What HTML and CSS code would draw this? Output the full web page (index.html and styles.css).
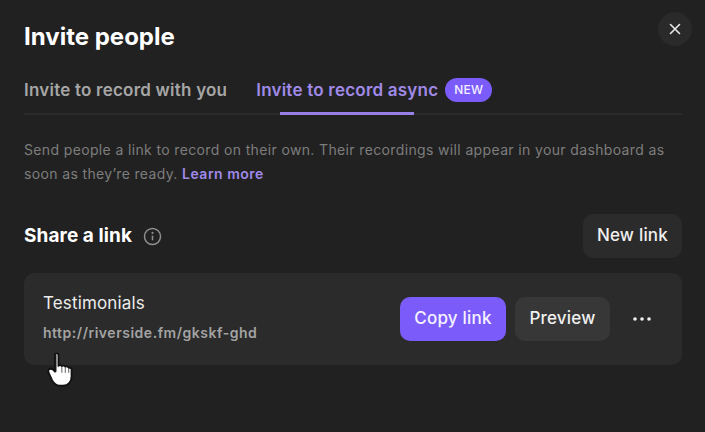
FILE: index.html
```html
<!DOCTYPE html>
<html lang="en">
<head>
    <meta charset="UTF-8">
    <meta name="viewport" content="width=device-width, initial-scale=1.0">
    <title>Invite people</title>
    <link rel="stylesheet" href="styles.css">
</head>
<body>
    <div class="modal">
        <button class="close-button" aria-label="Close">
            <svg width="12" height="12" viewBox="0 0 12 12"><path d="M1.5 1.5l9 9M10.500 1.500l-9 9" stroke="#e8e8e8" stroke-width="1.6" stroke-linecap="round" fill="none"/></svg>
        </button>
        <h1>Invite people</h1>
        <div class="tabs">
            <div class="tab">Invite to record with you</div>
            <div class="tab active">Invite to record async <span class="badge">NEW</span></div>
        </div>
        <p class="description">Send people a link to record on their own. Their recordings will appear in your dashboard as<br>soon as they’re ready. <a href="#">Learn more</a></p>
        <div class="share-header">
            <div class="share-title">
                <h2>Share a link</h2>
                <svg width="19" height="19" viewBox="0 0 18 18" fill="none"><circle cx="9" cy="9" r="7.6" stroke="#8f8f8f" stroke-width="1.4"/><path d="M9 8.200v4.400" stroke="#8f8f8f" stroke-width="1.5"/><circle cx="9" cy="5.600" r="1" fill="#8f8f8f"/></svg>
            </div>
            <button class="btn">New link</button>
        </div>
        <div class="link-card">
            <div class="link-info">
                <div class="link-name">Testimonials</div>
                <div class="link-url">http://riverside.fm/gkskf-ghd</div>
            </div>
            <div class="link-actions">
                <button class="btn primary">Copy link</button>
                <button class="btn preview">Preview</button>
                <button class="more" aria-label="More">
                    <svg width="20" height="4" viewBox="0 0 20 4" fill="#f0f0f0"><circle cx="3" cy="2" r="1.8"/><circle cx="10" cy="2" r="1.8"/><circle cx="17" cy="2" r="1.8"/></svg>
                </button>
            </div>
            <svg class="cursor" width="32" height="39" viewBox="0 0 28 34">
                <path d="M7 3.200c0-1.500 3-1.500 3 0V13c1-1 2.500-.8 3 .2 1-.8 2.500-.6 3 .5 1-.6 2.800-.2 3 1 .8-.3 2.500 0 2.500 1.500v6c0 4-2.500 8-7.500 8h-3c-3.500 0-5-2-6.500-4.500L1.500 19c-.8-1.800-.3-3.500 1.500-3.500 1.500 0 3 1 4 2.500z" fill="#fff" stroke="#111" stroke-width="1.600" stroke-linejoin="round"/>
                <path d="M7.800 3.500V18" stroke="#111" stroke-width="1"/>
                <path d="M13 14v5M16 14.500V19M19 15.500V19" stroke="#333" stroke-width=".7"/>
            </svg>
        </div>
    </div>
</body>
</html>
```

FILE: styles.css
```css
* {
    margin: 0;
    padding: 0;
    box-sizing: border-box;
    font-family: Inter, 'Noto Sans', sans-serif;
}
body {
    background-color: #212121;
    color: #fff;
    overflow: hidden;
    width: 705px;
    height: 432px;
}
button {
    border: none;
    cursor: pointer;
}
.modal {
    position: relative;
    padding: 21px 23px 0 24px;
}
.close-button {
    position: absolute;
    top: 12px;
    right: 13px;
    width: 34px;
    height: 34px;
    border-radius: 50%;
    background: #2a2a2a;
    display: flex;
    align-items: center;
    justify-content: center;
}
h1 {
    font-size: 24px;
    line-height: 31px;
    font-weight: 700;
    letter-spacing: 0;
}
.tabs {
    display: flex;
    gap: 29px;
    margin-top: 16px;
    border-bottom: 2px solid #2a2a2a;
    height: 47px;
}
.tab {
    font-size: 17px;
    font-weight: 600;
    line-height: 24px;
    letter-spacing: 0.22px;
    color: #a6a6a6;
    padding-top: 10px;
    display: flex;
    align-items: flex-start;
    position: relative;
    height: 47px;
}
.tab.active {
    color: #a08ae8;
}
.tab.active::after {
    content: "";
    position: absolute;
    left: 24px;
    bottom: 0;
    width: 134px;
    height: 3px;
    background: #9880e6;
}
.badge {
    background: #7b5cfa;
    color: #f4f0ff;
    font-size: 12px;
    font-weight: 500;
    letter-spacing: 0.3px;
    line-height: 24px;
    height: 24px;
    width: 47px;
    text-align: center;
    border-radius: 12px;
    margin-left: 7px;
}
.description {
    margin-top: 23px;
    font-size: 14px;
    line-height: 23.5px;
    letter-spacing: 0.36px;
    color: #7d7d7d;
}
.description a {
    color: #a08ae8;
    font-weight: 600;
    letter-spacing: 0.5px;
    text-decoration: none;
}
.share-header {
    display: flex;
    align-items: center;
    justify-content: space-between;
    margin-top: 29px;
}
.share-title {
    display: flex;
    align-items: center;
    gap: 11px;
}
h2 {
    font-size: 19px;
    font-weight: 700;
    letter-spacing: 0.08px;
    margin-top: -1px;
}
.btn {
    height: 44px;
    padding: 0 14px 2px;
    border-radius: 10px;
    background: #2b2b2b;
    color: #f0f0f0;
    font-size: 17px;
    font-weight: 500;
    letter-spacing: 0.2px;
}
.link-card {
    position: relative;
    margin-top: 15px;
    height: 92px;
    background: #2b2b2b;
    border-radius: 10px;
    padding: 0 19px;
    display: flex;
    align-items: center;
    justify-content: space-between;
}
.link-name {
    font-size: 17px;
    line-height: 22px;
    letter-spacing: 0.15px;
    color: #ececec;
    margin-top: -4px;
}
.link-url {
    margin-top: 10px;
    font-size: 14px;
    line-height: 18px;
    font-weight: 600;
    color: #a3a3a3;
    letter-spacing: 0.52px;
}
.link-actions {
    display: flex;
    align-items: center;
    gap: 10px;
}
.btn.primary {
    background: #7b5cfa;
    color: #f6f2ff;
    width: 106px;
    padding: 0 0 2px;
}
.btn.preview {
    background: #373737;
    width: 95px;
    padding: 0 0 2px;
    margin-left: -1px;
}
.more {
    background: none;
    width: 43px;
    height: 43px;
    display: flex;
    align-items: center;
    justify-content: center;
}
.cursor {
    position: absolute;
    left: 23px;
    top: 78px;
}
```
